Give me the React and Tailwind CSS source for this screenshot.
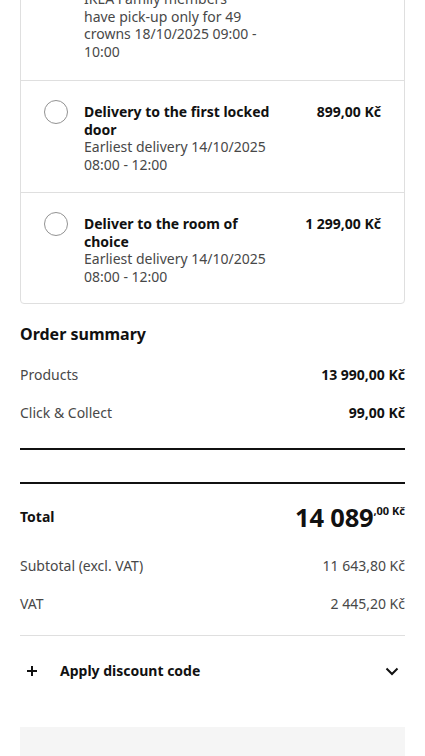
import React from 'react'

const font = { fontFamily: '"Noto Sans", "Open Sans", sans-serif' }

const Radio = () => (
  <span className="mt-[-3px] block h-6 w-6 shrink-0 rounded-full border border-[#929292] bg-white" />
)

const DeliveryOption = ({ title, lines, price, last }) => (
  <div className={`flex pl-[23px] pr-[23px] pt-[22px] ${last ? 'pb-[18px]' : 'pb-[19px] border-b border-[#dfdfdf]'}`}>
    <Radio />
    <div className="ml-4 flex-1 text-sm leading-[17.5px]">
      <p className="font-bold text-[#111]">{title}</p>
      {lines.map((l, i) => (
        <p key={i} className="text-[#484848]">{l}</p>
      ))}
    </div>
    <div className="ml-6 shrink-0 text-sm font-bold leading-[17.5px] text-[#111]">{price}</div>
  </div>
)

const SummaryRow = ({ label, value, bold, className = '' }) => (
  <div className={`flex items-center justify-between text-sm leading-5 ${className}`}>
    <span className="text-[#484848]">{label}</span>
    <span className={bold ? 'font-bold text-[#111]' : 'text-[#484848]'}>{value}</span>
  </div>
)

export default function App() {
  return (
    <div style={font} className="min-h-[756px] overflow-hidden bg-white px-5">
      {/* delivery options card, scrolled so its top is above the fold */}
      <div className="-mt-[11px] rounded border border-[#dfdfdf]">
        <div className="border-b border-[#dfdfdf] pb-[20px] pl-[63px] pr-6">
          <div className="text-sm leading-[17.5px] text-[#484848]">
            <p>IKEA Family members</p>
            <p>have pick-up only for 49</p>
            <p>crowns 18/10/2025 09:00 -</p>
            <p>10:00</p>
          </div>
        </div>
        <DeliveryOption
          title="Delivery to the first locked door"
          lines={['Earliest delivery 14/10/2025', '08:00 - 12:00']}
          price="899,00 Kč"
        />
        <DeliveryOption
          title="Deliver to the room of choice"
          lines={['Earliest delivery 14/10/2025', '08:00 - 12:00']}
          price="1 299,00 Kč"
          last
        />
      </div>

      {/* order summary */}
      <h2 className="mt-[18px] text-base font-bold leading-6 text-[#111]">Order summary</h2>
      <SummaryRow label="Products" value="13 990,00 Kč" bold className="mt-[19px]" />
      <SummaryRow label="Click & Collect" value="99,00 Kč" bold className="mt-[18px]" />

      <div className="mt-[25px] h-[2px] bg-[#111]" />
      <div className="mt-[32px] h-[2px] bg-[#111]" />

      <div className="mt-4 flex h-[34px] items-center justify-between">
        <span className="text-sm font-bold text-[#111]">Total</span>
        <span className="flex items-start font-bold text-[#111]">
          <span className="text-[25.5px] leading-[34px] tracking-[-0.2px]">14 089</span>
          <span className="mt-[5px] text-[11px] leading-none">,00 Kč</span>
        </span>
      </div>

      <SummaryRow label="Subtotal (excl. VAT)" value="11 643,80 Kč" className="mt-[22px]" />
      <SummaryRow label="VAT" value="2 445,20 Kč" className="mt-[18px]" />

      <div className="mt-[21px] h-px bg-[#dfdfdf]" />

      {/* discount code */}
      <div className="mt-[25px] flex items-center text-sm leading-5">
        <svg width="24" height="20" viewBox="0 0 24 20" className="shrink-0">
          <path d="M12 5v10M7 10h10" stroke="#111" strokeWidth="2" fill="none" />
        </svg>
        <span className="ml-4 flex-1 font-bold text-[#111]">Apply discount code</span>
        <svg width="20" height="20" viewBox="0 0 20 20" className="mr-[3px] shrink-0">
          <path d="M4.5 7.5l5.5 5.5 5.5-5.5" stroke="#111" strokeWidth="2" fill="none" />
        </svg>
      </div>

      <div className="mt-[46px] h-[80px] bg-[#f5f5f5]" />
    </div>
  )
}
